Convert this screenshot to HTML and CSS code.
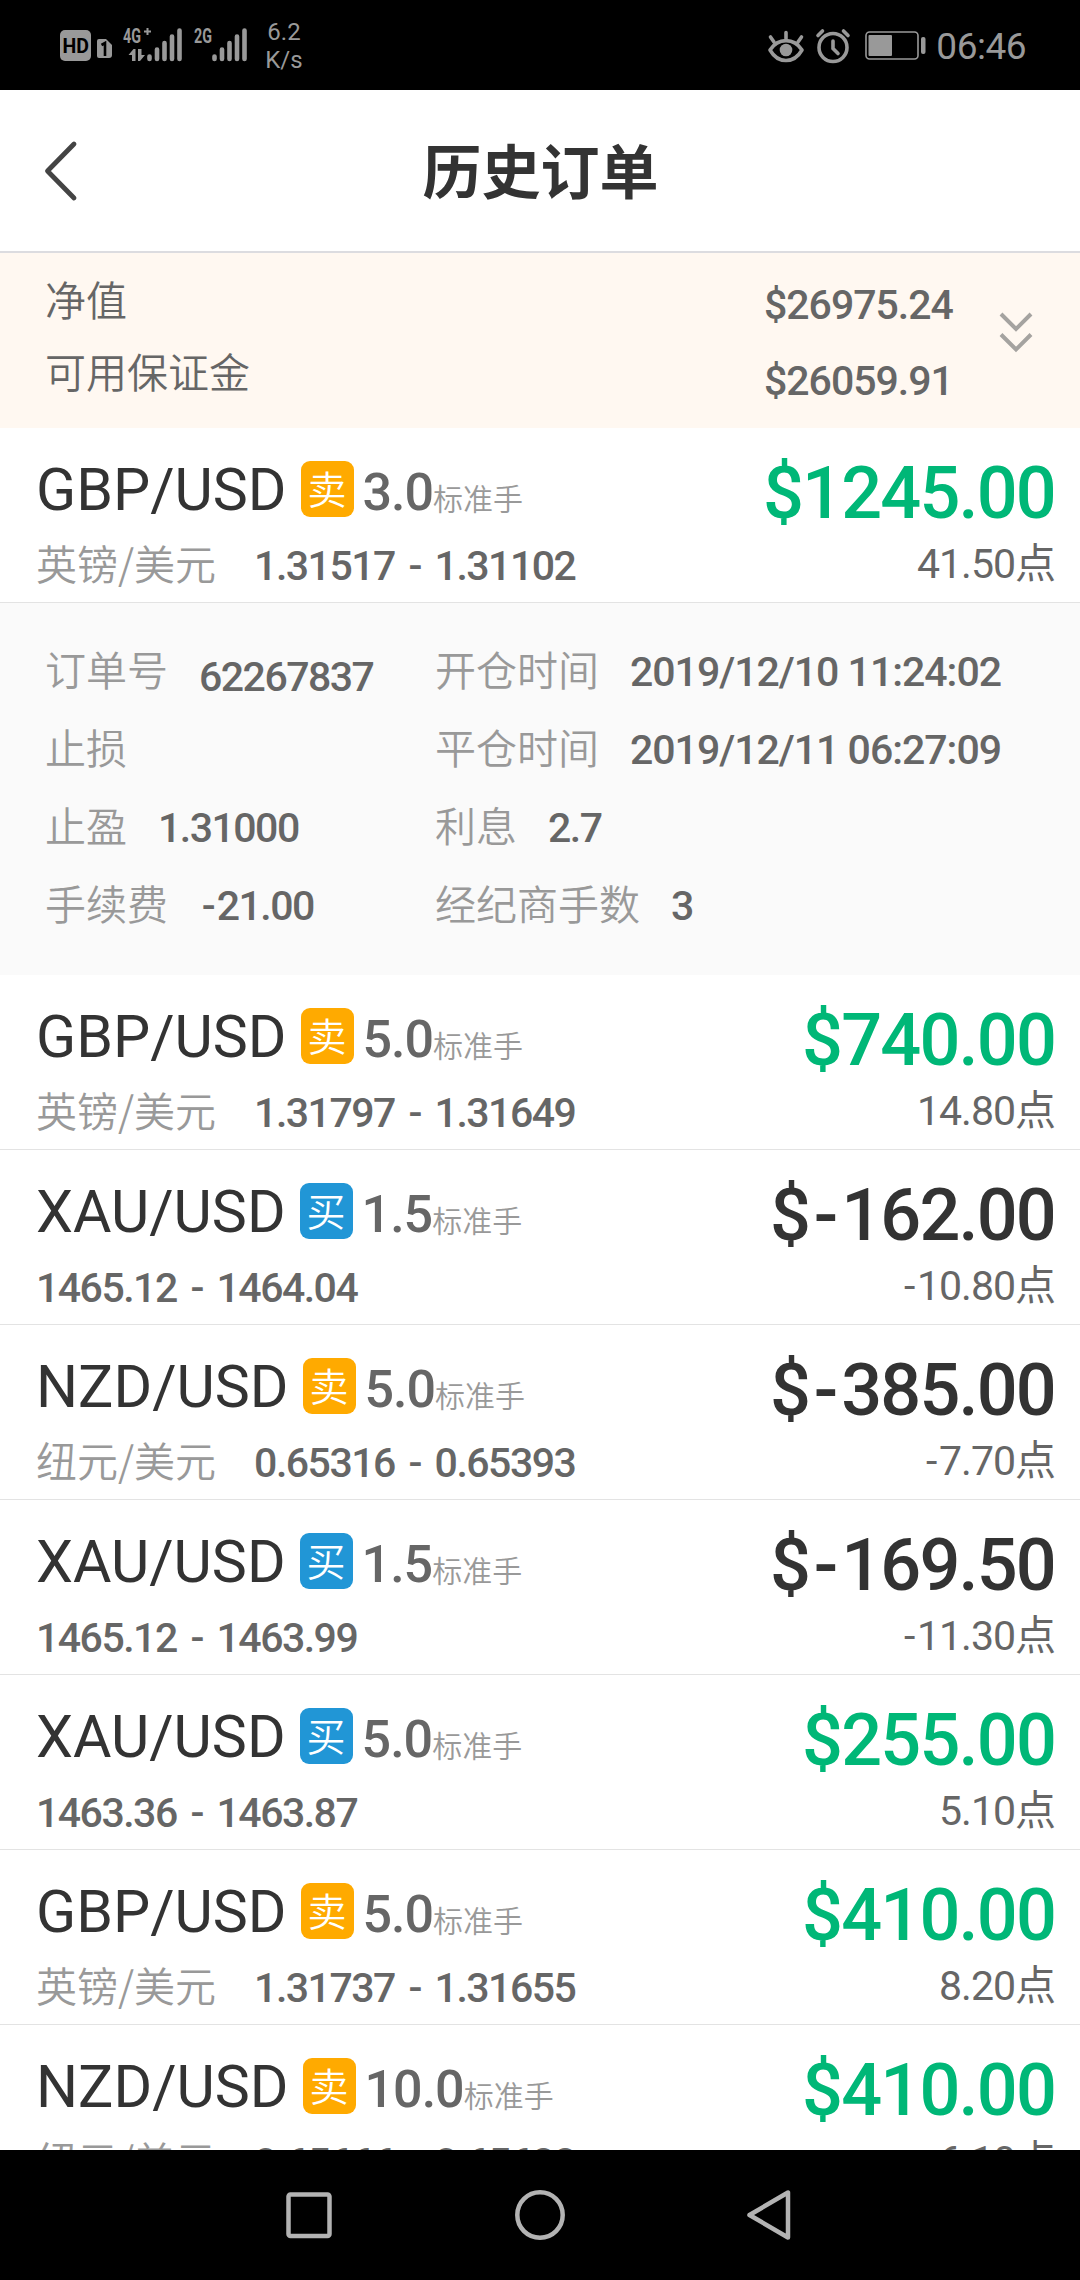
FILE: index.html
```html
<!DOCTYPE html>
<html lang="zh-CN">
<head>
<meta charset="utf-8">
<title>历史订单</title>
<link rel="stylesheet" href="styles.css">
</head>
<body>
<div class="status">
  <svg class="status-signal" width="190" height="36" viewBox="0 0 190 36">
    <rect x="0" y="3" width="31" height="31" rx="5" fill="#999"/>
    <text class="hd" x="2.5" y="25.5" textLength="26.5" lengthAdjust="spacingAndGlyphs">HD</text>
    <path d="M39 12h7l6 6v10a3 3 0 0 1-3 3h-10a2 2 0 0 1-2-2V14a2 2 0 0 1 2-2z" fill="#999"/>
    <path d="M41.5 18l3.5-2v13" fill="none" stroke="#000" stroke-width="2.6"/>
    <text class="net" x="63" y="15.500" textLength="18" lengthAdjust="spacingAndGlyphs">4G</text>
    <path d="M84 4.500h7M87.500 1v7" stroke="#999" stroke-width="2"/>
    <path d="M75.500 34V22h-2l-5 6h3.500v6zM78 22v12h2l5-6h-3.500v-6z" fill="#999"/>
    <path d="M89.500 32v-2.500M97 32v-9.500M104.500 32V16M112 32V9.500M119.500 32V3.500" stroke="#999" stroke-width="4.600" stroke-linecap="round"/>
    <text class="net" x="134" y="15.500" textLength="18" lengthAdjust="spacingAndGlyphs">2G</text>
    <path d="M154.500 32v-2.500M162 32v-9.500M169.500 32V16M177 32V9.500M184.500 32V3.500" stroke="#999" stroke-width="4.600" stroke-linecap="round"/>
  </svg>
  <div class="speed"><span>6.2</span><span>K/s</span></div>
  <div class="status-right">
    <svg width="36" height="36" viewBox="0 0 36 36" fill="none" stroke="#999" stroke-width="3.600" stroke-linecap="round">
      <path d="M2 22C10 9.500 26 9.500 34 22C26 36 10 36 2 22z" stroke-linejoin="round"/>
      <circle cx="18" cy="22" r="6.300" fill="#999" stroke="none"/>
      <path d="M18 4.500v6M2.500 9l3.500 5M33.500 9L30 14"/>
    </svg>
    <svg width="34" height="36" viewBox="0 0 34 36" fill="none" stroke="#999" stroke-width="3.600" stroke-linecap="round">
      <circle cx="17" cy="19.500" r="14"/>
      <path d="M17 13v7.500l5 5M2 7.500l4.500-4.500M32 7.500L27.500 3"/>
    </svg>
    <svg class="battery" width="61" height="36" viewBox="0 0 61 36">
      <rect x="1" y="4" width="52" height="27" rx="3.500" fill="none" stroke="#999" stroke-width="1.600"/>
      <rect x="3.500" y="7" width="23.500" height="21" rx="1" fill="#999"/>
      <rect x="56" y="9" width="4.500" height="17" rx="2" fill="#999"/>
    </svg>
    <span class="clock">06:46</span>
  </div>
</div>

<header class="header">
  <svg class="back" width="34" height="62" viewBox="0 0 34 62" fill="none" stroke="#444" stroke-width="4.800" stroke-linecap="round" stroke-linejoin="round"><path d="M30 4L3.500 31L30 58"/></svg>
  <h1 class="title">历史订单</h1>
</header>

<section class="summary">
  <div class="summary-labels"><span>净值</span><span>可用保证金</span></div>
  <div class="summary-values num"><span>$26975.24</span><span>$26059.91</span></div>
  <svg class="expand" width="34" height="42" viewBox="0 0 34 42" fill="none" stroke="#a5a3a0" stroke-width="4"><path d="M2 3l15 15L32 3M2 23.500l15 15l15-15"/></svg>
</section>

<main class="list">
  <article class="order">
    <div class="info">
      <div class="head"><span class="pair">GBP/USD</span><span class="badge sell">卖</span><span class="volume num">3.0</span><span class="unit">标准手</span></div>
      <div class="sub"><span class="cn">英镑/美元</span><span class="num">1.31517 - 1.31102</span></div>
    </div>
    <div class="result"><span class="amount num up">$1245.00</span><span class="points num">41.50点</span></div>
  </article>
  <section class="detail">
    <div class="field"><span class="cn">订单号</span><span class="num order-no">62267837</span></div>
    <div class="field"><span class="cn">开仓时间</span><span class="num date">2019/12/10 11:24:02</span></div>
    <div class="field"><span class="cn">止损</span></div>
    <div class="field"><span class="cn">平仓时间</span><span class="num date">2019/12/11 06:27:09</span></div>
    <div class="field"><span class="cn">止盈</span><span class="num">1.31000</span></div>
    <div class="field"><span class="cn">利息</span><span class="num">2.7</span></div>
    <div class="field"><span class="cn">手续费</span><span class="num"><span class="minus">-</span>21.00</span></div>
    <div class="field"><span class="cn">经纪商手数</span><span class="num">3</span></div>
  </section>
  <article class="order">
    <div class="info">
      <div class="head"><span class="pair">GBP/USD</span><span class="badge sell">卖</span><span class="volume num">5.0</span><span class="unit">标准手</span></div>
      <div class="sub"><span class="cn">英镑/美元</span><span class="num">1.31797 - 1.31649</span></div>
    </div>
    <div class="result"><span class="amount num up">$740.00</span><span class="points num">14.80点</span></div>
  </article>
  <article class="order">
    <div class="info">
      <div class="head"><span class="pair">XAU/USD</span><span class="badge buy">买</span><span class="volume num">1.5</span><span class="unit">标准手</span></div>
      <div class="sub"><span class="num">1465.12 - 1464.04</span></div>
    </div>
    <div class="result"><span class="amount num">$<span class="minus">-</span>162.00</span><span class="points num"><span class="minus">-</span>10.80点</span></div>
  </article>
  <article class="order">
    <div class="info">
      <div class="head"><span class="pair">NZD/USD</span><span class="badge sell">卖</span><span class="volume num">5.0</span><span class="unit">标准手</span></div>
      <div class="sub"><span class="cn">纽元/美元</span><span class="num">0.65316 - 0.65393</span></div>
    </div>
    <div class="result"><span class="amount num">$<span class="minus">-</span>385.00</span><span class="points num"><span class="minus">-</span>7.70点</span></div>
  </article>
  <article class="order">
    <div class="info">
      <div class="head"><span class="pair">XAU/USD</span><span class="badge buy">买</span><span class="volume num">1.5</span><span class="unit">标准手</span></div>
      <div class="sub"><span class="num">1465.12 - 1463.99</span></div>
    </div>
    <div class="result"><span class="amount num">$<span class="minus">-</span>169.50</span><span class="points num"><span class="minus">-</span>11.30点</span></div>
  </article>
  <article class="order">
    <div class="info">
      <div class="head"><span class="pair">XAU/USD</span><span class="badge buy">买</span><span class="volume num">5.0</span><span class="unit">标准手</span></div>
      <div class="sub"><span class="num">1463.36 - 1463.87</span></div>
    </div>
    <div class="result"><span class="amount num up">$255.00</span><span class="points num">5.10点</span></div>
  </article>
  <article class="order">
    <div class="info">
      <div class="head"><span class="pair">GBP/USD</span><span class="badge sell">卖</span><span class="volume num">5.0</span><span class="unit">标准手</span></div>
      <div class="sub"><span class="cn">英镑/美元</span><span class="num">1.31737 - 1.31655</span></div>
    </div>
    <div class="result"><span class="amount num up">$410.00</span><span class="points num">8.20点</span></div>
  </article>
  <article class="order">
    <div class="info">
      <div class="head"><span class="pair">NZD/USD</span><span class="badge sell">卖</span><span class="volume num">10.0</span><span class="unit">标准手</span></div>
      <div class="sub"><span class="cn">纽元/美元</span><span class="num">0.65666 - 0.65688</span></div>
    </div>
    <div class="result"><span class="amount num up">$410.00</span><span class="points num">6.10点</span></div>
  </article>
</main>

<nav class="navbar">
  <svg width="50" height="54" viewBox="0 0 50 54" fill="none" stroke="#b3b3b3" stroke-width="4.500"><rect x="4.500" y="6.500" width="41" height="41.500" rx="2"/></svg>
  <svg width="50" height="54" viewBox="0 0 50 54" fill="none" stroke="#b3b3b3" stroke-width="4.500"><circle cx="25" cy="27" r="22.700"/></svg>
  <svg width="50" height="54" viewBox="0 0 50 54" fill="none" stroke="#b3b3b3" stroke-width="4.500" stroke-linejoin="round"><path d="M42 4.500v45L3.500 27z"/></svg>
</nav>
</body>
</html>
```
FILE: styles.css
```css
* { box-sizing: border-box; }

body {
  margin: 0;
  width: 1080px;
  height: 2280px;
  display: flex;
  flex-direction: column;
  overflow: hidden;
  background: #fff;
  color: #333;
  font-family: Roboto, "Noto Sans CJK SC", sans-serif;
}

svg { display: block; flex: none; overflow: visible; }

/* system status bar */
.status {
  flex: none;
  height: 90px;
  background: #000;
  color: #999;
  display: flex;
  align-items: flex-start;
  padding: 27px 54px 0 60px;
}
.hd { font: 700 20px Roboto, sans-serif; fill: #000; }
.net { font: 700 21px Roboto, sans-serif; fill: #999; }
.speed {
  margin: -9px 0 0 13px;
  width: 42px;
  display: flex;
  flex-direction: column;
  align-items: center;
  font-size: 24px;
  line-height: 28px;
}
.status-right { margin-left: auto; display: flex; gap: 12px; padding-top: 1px; }
.battery { margin-left: 3px; }
.clock { margin-left: -2px; font-size: 37px; line-height: 38px; letter-spacing: -0.5px; }

/* page title */
.header {
  flex: none;
  height: 163px;
  border-bottom: 2px solid #dcdce0;
  display: grid;
  grid-template-columns: 1fr auto 1fr;
  align-items: center;
  padding: 0 43px 0 44px;
}
.title {
  grid-column: 2;
  margin: 6px 0 0;
  font-size: 59px;
  line-height: 80px;
  font-weight: 700;
}

.num { font-weight: 500; color: #666; white-space: pre; letter-spacing: -1.5px; }
.cn { font-family: "Noto Sans CJK SC", sans-serif; font-weight: 350; color: #999; }
.minus { margin: 0 0.065em; }

/* account summary */
.summary {
  flex: none;
  height: 175px;
  background: #fff8f1;
  display: flex;
  align-items: flex-start;
  padding: 0 47px 0 45px;
  font-size: 41px;
}
.summary-labels {
  margin-top: 13px;
  flex: 1;
  display: flex;
  flex-direction: column;
  line-height: 72px;
  font-weight: 350;
  color: #666;
}
.summary-values {
  margin-top: 14px;
  width: 235px;
  display: flex;
  flex-direction: column;
  line-height: 76px;
  letter-spacing: -1px;
}
.expand { margin-top: 58px; }

/* orders */
.list { flex: 1; min-height: 0; overflow: hidden; }
.order {
  height: 175px;
  border-bottom: 1px solid #e3e3e3;
  display: flex;
  justify-content: space-between;
  padding: 0 25px 0 36px;
}
.info { padding-top: 32px; }
.head { height: 60px; display: flex; align-items: baseline; }
.pair { font-size: 59px; line-height: 60px; }
.badge {
  align-self: flex-start;
  margin: 1px 9px 0 14px;
  width: 53px;
  height: 56px;
  border-radius: 9px;
  color: #fff;
  font-size: 39px;
  line-height: 61px;
  font-weight: 350;
  text-align: center;
}
.sell { background: #fa0; }
.buy { background: #2196d6; }
.volume { font-size: 52px; line-height: 60px; letter-spacing: -1px; }
.unit { font-size: 30px; line-height: 40px; font-weight: 350; color: #999; }
.sub {
  margin-top: 21px;
  display: flex;
  align-items: baseline;
  gap: 38px;
  font-size: 41px;
  line-height: 50px;
}
.sub .cn { line-height: 30px; }
.sub .num { word-spacing: 5px; }
.result { padding-top: 26px; display: flex; flex-direction: column; align-items: flex-end; }
.amount { font-size: 72px; line-height: 80px; letter-spacing: -1.8px; color: #333; }
.up { color: #00b777; }
.points { margin-top: 5px; font-size: 41px; line-height: 50px; letter-spacing: -1px; font-weight: 400; }

/* expanded order */
.detail {
  height: 372px;
  background: #fafafa;
  display: grid;
  grid-template-columns: 390px 1fr;
  grid-auto-rows: 78px;
  padding: 30px 0 0 45px;
  font-size: 41px;
  line-height: 78px;
}
.field { display: flex; align-items: baseline; gap: 31px; height: 78px; }
.field .cn { line-height: 60px; }
.field:nth-child(3) { padding-top: 5px; }
.date { letter-spacing: -1px; }
.order-no { position: relative; top: 5px; }

/* system navigation */
.navbar {
  flex: none;
  height: 130px;
  background: #000;
  display: flex;
  justify-content: center;
  align-items: center;
  gap: 181px;
}
```
